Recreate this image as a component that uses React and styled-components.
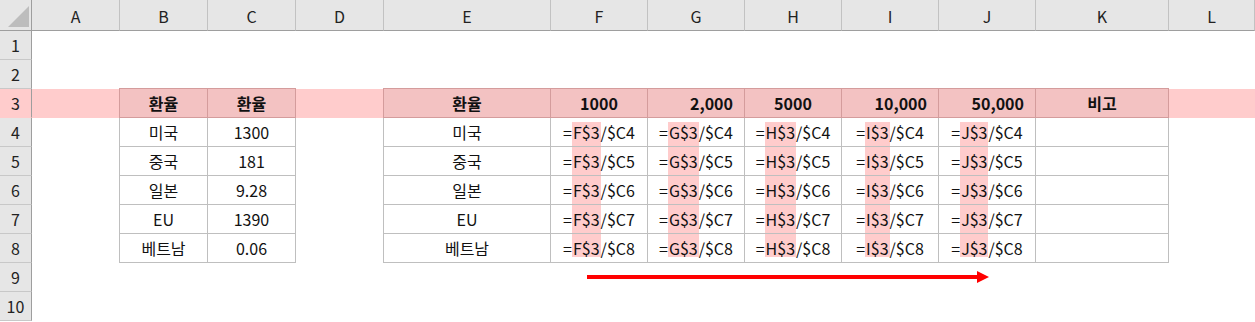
import React from "react";
import styled, { createGlobalStyle } from "styled-components";

const GlobalStyle = createGlobalStyle`
	html, body {
		margin: 0;
		padding: 0;
		background: #ffffff;
	}
	body {
		font-family: "Noto Sans CJK KR", "Noto Sans", sans-serif;
		color: #111111;
	}
`;

const BAND = "#ffcccc";
const HEAD_BG = "#f3c2c2";
const HEAD_LINE = "#d49c9c";
const GRID_LINE = "#bfbfbf";

const Wrap = styled.div`
	position: relative;
	width: 1255px;
	height: 322px;
	overflow: hidden;
`;

const Sheet = styled.div`
	display: grid;
	grid-template-columns: 32px 88px 88px 88px 88px 167px 97px 97px 97px 97px 97px 133px 1fr;
	grid-template-rows: 31px repeat(10, 29px);
	font-size: 16px;
	line-height: 1;
`;

const Corner = styled.div`
	background: #e6e6e6;
	border-right: 1px solid #9e9e9e;
	border-bottom: 1px solid #9e9e9e;
	box-sizing: border-box;
	display: flex;
	align-items: flex-end;
	justify-content: flex-end;
	padding: 0 2px 3px 0;
`;

const ColHead = styled.div`
	background: #e6e6e6;
	border-right: 1px solid #c2c2c2;
	border-bottom: 1px solid #9e9e9e;
	box-sizing: border-box;
	display: flex;
	align-items: center;
	justify-content: center;
	color: #222;
	padding-top: 1px;
`;

const RowHead = styled.div`
	background: ${p => (p.$band ? BAND : "#e6e6e6")};
	border-right: 1px solid #9e9e9e;
	border-bottom: 1px solid ${p => (p.$band ? BAND : "#c8c8c8")};
	box-sizing: border-box;
	display: flex;
	align-items: center;
	justify-content: center;
	color: #222;
`;

const Cell = styled.div`
	box-sizing: border-box;
	display: flex;
	align-items: center;
	justify-content: ${p =>
		p.$align === "right" ? "flex-end" : p.$align === "left" ? "flex-start" : "center"};
	padding: ${p => (p.$align === "right" ? "0 11px 0 0" : "0")};
	background: ${p => (p.$head ? HEAD_BG : p.$band ? BAND : "transparent")};
	font-weight: ${p => (p.$head ? 700 : 400)};
	border-right: ${p => (p.$boxed ? `1px solid ${p.$head ? HEAD_LINE : GRID_LINE}` : "none")};
	border-bottom: ${p => (p.$boxed ? `1px solid ${p.$head ? HEAD_LINE : GRID_LINE}` : "none")};
	border-top: ${p => (p.$head ? `1px solid ${HEAD_LINE}` : "none")};
	border-left: ${p =>
		p.$first ? `1px solid ${p.$head ? HEAD_LINE : GRID_LINE}` : "none"};
	margin-left: ${p => (p.$first ? "-1px" : "0")};
	margin-top: ${p => (p.$head ? "-1px" : "0")};
`;

const Formula = styled.span`
	display: flex;
	align-self: stretch;
	align-items: center;
`;

const Mark = styled.span`
	display: flex;
	align-self: stretch;
	align-items: center;
	padding: 0 1px;
	background: ${p =>
		p.$pos === "first"
			? `linear-gradient(to bottom, transparent 4px, ${BAND} 4px)`
			: p.$pos === "last"
			? `linear-gradient(to top, transparent 5px, ${BAND} 5px)`
			: BAND};
`;

const Arrow = styled.svg`
	position: absolute;
	left: 587px;
	top: 271px;
`;

const COLS = ["A", "B", "C", "D", "E", "F", "G", "H", "I", "J", "K", "L"];
const MONEY = ["F", "G", "H", "I", "J"];

const small = [
	["미국", "1300"],
	["중국", "181"],
	["일본", "9.28"],
	["EU", "1390"],
	["베트남", "0.06"]
];

const heads = {
	B: { text: "환율" },
	C: { text: "환율" },
	E: { text: "환율" },
	F: { text: "1000" },
	G: { text: "2,000", align: "right" },
	H: { text: "5000" },
	I: { text: "10,000", align: "right" },
	J: { text: "50,000", align: "right" },
	K: { text: "비고" }
};

function renderCell(row, col) {
	const key = `${col}${row}`;
	if (row === 3) {
		const h = heads[col];
		if (!h) return <Cell key={key} $band />;
		return (
			<Cell key={key} $head $boxed $first={col === "B" || col === "E"} $align={h.align}>
				{h.text}
			</Cell>
		);
	}
	if (row >= 4 && row <= 8) {
		const i = row - 4;
		if (col === "B" || col === "E") {
			return (
				<Cell key={key} $boxed $first>
					{small[i][0]}
				</Cell>
			);
		}
		if (col === "C") {
			return (
				<Cell key={key} $boxed>
					{small[i][1]}
				</Cell>
			);
		}
		if (MONEY.includes(col)) {
			const pos = row === 4 ? "first" : row === 8 ? "last" : "mid";
			return (
				<Cell key={key} $boxed>
					<Formula>
						=<Mark $pos={pos}>{col}$3</Mark>/$C{row}
					</Formula>
				</Cell>
			);
		}
		if (col === "K") return <Cell key={key} $boxed />;
	}
	return <Cell key={key} />;
}

export default function App() {
	const rows = [1, 2, 3, 4, 5, 6, 7, 8, 9, 10];
	return (
		<Wrap>
			<GlobalStyle />
			<Sheet>
				<Corner>
					<svg width="21" height="21" viewBox="0 0 21 21">
						<polygon points="21,0 21,21 0,21" fill="#bdbdbd" />
					</svg>
				</Corner>
				{COLS.map(c => (
					<ColHead key={c}>{c}</ColHead>
				))}
				{rows.map(r => (
					<React.Fragment key={r}>
						<RowHead $band={r === 3}>{r}</RowHead>
						{COLS.map(c => renderCell(r, c))}
					</React.Fragment>
				))}
			</Sheet>
			<Arrow width="402" height="12" viewBox="0 0 402 12">
				<rect x="0" y="4" width="392" height="4" fill="#ff0000" />
				<polygon points="390,0 402,6 390,12" fill="#ff0000" />
			</Arrow>
		</Wrap>
	);
}
